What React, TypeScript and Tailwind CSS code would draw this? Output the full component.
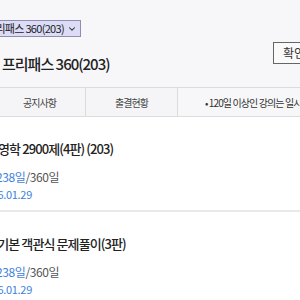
import { ChevronDown } from "lucide-react";

const items = [
  { title: "경영학 2900제(4판) (203)", titleShift: "-ml-[13px]", used: "238일", total: "/360일", date: "2026.01.29" },
  { title: "행정학 기본 객관식 문제풀이(3판)", titleShift: "-ml-[38px]", used: "238일", total: "/360일", date: "2026.01.29" },
];

export default function App() {
  return (
    <main
      className="w-[300px] h-[300px] overflow-hidden bg-white text-[#222] whitespace-nowrap"
      style={{ fontFamily: '"Noto Sans CJK KR", "Noto Sans", sans-serif' }}
    >
      <div className="bg-[#f7f7f9]">

        <div className="h-[42px] pt-[14px]">
          <div className="-ml-[17px] inline-flex h-[17px] items-center gap-[3px] pl-[2px] pr-[3px] bg-[#dcdcf7] border border-[#8e8eb2] text-[11px] leading-none tracking-[-0.7px] text-[#222]">
            <span>프리패스 360(203)</span>
            <ChevronDown size={10} strokeWidth={2.5} className="shrink-0" />
          </div>
        </div>

        <div className="h-[45px] flex justify-between">
          <h1 className="pl-[2px] pt-[12px] text-[15px] leading-[20px] font-medium tracking-[-1px]">
            프리패스 360(203)
          </h1>
          <button className="shrink-0 -mr-[22px] w-[49px] h-[22px] border border-[#666] bg-[#fafafa] text-[12px] leading-none text-[#333] text-left pl-[9px]">
            확인
          </button>
        </div>

        <div className="h-[30px] flex items-stretch border-t border-b border-[#dcdcdc]">
          <div className="shrink-0 -ml-[6px] w-[92px] flex items-center justify-center bg-[#f5f5f7] border-r border-[#dcdcdc] text-[10px] tracking-[-1px] text-[#444]">
            공지사항
          </div>
          <div className="shrink-0 w-[92px] flex items-center justify-center bg-[#f5f5f7] border-r border-[#dcdcdc] text-[10px] tracking-[-1px] text-[#444]">
            출결현황
          </div>
          <p className="shrink-0 pl-[27px] flex items-center text-[10px] tracking-[-0.9px] text-[#333]">
            • 120일 이상인 강의는 일시정지가 가능합니다.
          </p>
        </div>

      </div>

      {items.map((item) => (
        <div key={item.title} className="h-[95px] pt-[22px] border-b-2 border-[#e9e9e9]">
          <h2 className={`${item.titleShift} text-[13px] leading-[19px] font-medium tracking-[-0.9px]`}>
            {item.title}
          </h2>
          <p className="-ml-[4px] mt-[11px] text-[12px] leading-[16px] tracking-[-0.4px]">
            <span className="text-[#3d7fe0]">{item.used}</span>
            <span className="text-[#555]">{item.total}</span>
          </p>
          <p className="-ml-[20px] mt-[1px] text-[11px] leading-[16px] tracking-[-0.3px] text-[#3d7fe0]">
            {item.date}
          </p>
        </div>
      ))}
    </main>
  );
}
